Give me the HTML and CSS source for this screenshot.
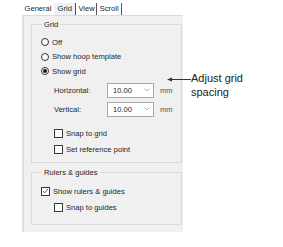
FILE: index.html
```html
<!DOCTYPE html>
<html>
<head>
    <title>Grid Options</title>
    <link rel="stylesheet" href="styles.css">
</head>
<body>

    <div class="dialog">
        <div class="tabs">
            <span class="tab">General</span>
            <span class="tab active">Grid</span>
            <span class="tab sep">View</span>
            <span class="tab sep last">Scroll</span>
        </div>

        <div class="panel">
            <fieldset class="group grid-group">
                <legend>Grid</legend>

                <div class="opt first"><span class="radio"></span>Off</div>
                <div class="opt"><span class="radio"></span>Show hoop template</div>
                <div class="opt"><span class="radio on"></span>Show grid</div>

                <div class="field first">
                    <span class="label">Horizontal:</span>
                    <span class="combo">10.00
                        <svg class="chev" width="6" height="4" viewBox="0 0 6 4"><polyline points="0.5,0.5 3,3 5.5,0.5" fill="none" stroke="#9a9a9a" stroke-width="0.8"/></svg>
                    </span>
                    <span class="unit">mm</span>
                </div>
                <div class="field">
                    <span class="label">Vertical:</span>
                    <span class="combo">10.00
                        <svg class="chev" width="6" height="4" viewBox="0 0 6 4"><polyline points="0.5,0.5 3,3 5.5,0.5" fill="none" stroke="#9a9a9a" stroke-width="0.8"/></svg>
                    </span>
                    <span class="unit">mm</span>
                </div>

                <div class="check indent gap"><span class="box"></span>Snap to grid</div>
                <div class="check indent"><span class="box"></span>Set reference point</div>
            </fieldset>

            <fieldset class="group rulers-group">
                <legend>Rulers &amp; guides</legend>
                <div class="check first">
                    <span class="box">
                        <svg width="8" height="8" viewBox="0 0 8 8"><polyline points="1.2,4 3.2,6 6.8,1.6" fill="none" stroke="#333" stroke-width="0.9"/></svg>
                    </span>Show rulers &amp; guides
                </div>
                <div class="check indent"><span class="box"></span>Snap to guides</div>
            </fieldset>
        </div>
    </div>

    <!-- callout pointing at the spacing fields -->
    <div class="note">
        <svg class="arrow" width="24" height="7" viewBox="0 0 24 7">
            <polygon points="0,3.5 5,1.5 5,5.5" fill="#333"/>
            <line x1="4" y1="3.5" x2="24" y2="3.5" stroke="#333" stroke-width="1"/>
        </svg>
        <div class="note-text">Adjust grid<br>spacing</div>
    </div>

</body>
</html>
```

FILE: styles.css
```css
body {
    margin: 0;
    background: #ffffff;
    font-family: "Liberation Sans", Arial, sans-serif;
    position: relative;
    height: 247px;
}

.dialog {
    margin-left: 22px;
    width: 161px;
    font-size: 7.6px;
    color: #1e1e1e;
}

.tabs {
    display: flex;
    height: 15px;
    align-items: flex-end;
}

.tab {
    height: 12px;
    line-height: 12px;
    padding: 0 2.5px;
    white-space: nowrap;
}

.tab.active {
    background-color: #eaf2fa;
    padding: 0 3.5px;
}

.tabs .active,
.tabs .sep {
    border-right: 1px solid #555;
}

.tabs .sep {
    padding: 0 1px;
    margin-left: 1px;
}

.tabs .last {
    padding: 0 2px;
}

.panel {
    background-color: #f0f0f0;
    border-top: 1px solid #cfdde9;
    border-left: 2px solid #d3e2ef;
    padding: 4px 1px 7px 7px;
}

.group {
    margin: 0;
    border: 1px solid #dadada;
    padding: 0 0 5px 9px;
}

.group legend {
    padding: 0 2px;
    margin-left: 1px;
    line-height: 9px;
    height: 9px;
}

.rulers-group {
    margin-top: 4.5px;
    padding-bottom: 9px;
}

.opt {
    display: flex;
    align-items: center;
    height: 14.5px;
    gap: 3px;
}

.opt.first {
    margin-top: 6px;
}

.radio {
    width: 6px;
    height: 6px;
    border: 1px solid #333;
    border-radius: 50%;
    background: #fbfbfb;
    display: flex;
    align-items: center;
    justify-content: center;
}

.radio.on::after {
    content: "";
    width: 4px;
    height: 4px;
    border-radius: 50%;
    background: #1a1a1a;
}

.field {
    display: flex;
    align-items: center;
    height: 15px;
    margin-top: 4px;
    padding-left: 13px;
}

.field .label {
    width: 53px;
}

.combo {
    box-sizing: border-box;
    width: 47px;
    height: 15px;
    background: #ffffff;
    border: 1px solid #a9a9a9;
    display: flex;
    align-items: center;
    justify-content: space-between;
    padding: 0 3px 0 5px;
}

.unit {
    margin-left: 6px;
    color: #555;
}

.check {
    display: flex;
    align-items: center;
    height: 16px;
    gap: 3px;
}

.check.first {
    margin-top: 6.5px;
}

.check.gap {
    margin-top: 8.5px;
}

.check.indent {
    padding-left: 13px;
}

.box {
    box-sizing: border-box;
    width: 9px;
    height: 9px;
    border: 1px solid #3a3a3a;
    background: #fdfdfd;
    display: flex;
    align-items: center;
    justify-content: center;
}

.note {
    position: absolute;
    left: 167px;
    top: 71px;
    display: flex;
    align-items: flex-start;
    font-size: 11px;
    line-height: 14px;
    color: #222;
}

.arrow {
    margin-top: 5px;
}
```
